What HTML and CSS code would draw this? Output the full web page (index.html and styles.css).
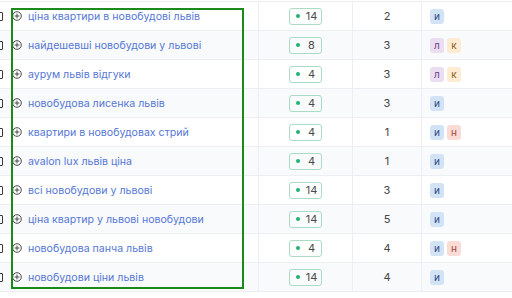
FILE: index.html
```html
<!DOCTYPE html>
<html lang="uk">
<head>
<meta charset="utf-8">
<link rel="stylesheet" href="styles.css">
</head>
<body>
<div class="table">
  <div class="row">
    <div class="cell phrase"><span class="check"></span><svg class="plus" viewBox="0 0 10 10"><circle cx="5" cy="5" r="4.3"/><path d="M5 2.6v4.8M2.6 5h4.8"/></svg><span class="text">ціна квартири в новобудові львів</span></div>
    <div class="cell freq"><span class="badge"><i class="dot"></i><span class="num">14</span></span></div>
    <div class="cell count">2</div>
    <div class="cell tags"><span class="tag t-i">и</span></div>
  </div>
  <div class="row">
    <div class="cell phrase"><span class="check"></span><svg class="plus" viewBox="0 0 10 10"><circle cx="5" cy="5" r="4.3"/><path d="M5 2.6v4.8M2.6 5h4.8"/></svg><span class="text">найдешевші новобудови у львові</span></div>
    <div class="cell freq"><span class="badge"><i class="dot"></i><span class="num">8</span></span></div>
    <div class="cell count">3</div>
    <div class="cell tags"><span class="tag t-l">л</span><span class="tag t-k">к</span></div>
  </div>
  <div class="row">
    <div class="cell phrase"><span class="check"></span><svg class="plus" viewBox="0 0 10 10"><circle cx="5" cy="5" r="4.3"/><path d="M5 2.6v4.8M2.6 5h4.8"/></svg><span class="text">аурум львів відгуки</span></div>
    <div class="cell freq"><span class="badge"><i class="dot"></i><span class="num">4</span></span></div>
    <div class="cell count">3</div>
    <div class="cell tags"><span class="tag t-l">л</span><span class="tag t-k">к</span></div>
  </div>
  <div class="row">
    <div class="cell phrase"><span class="check"></span><svg class="plus" viewBox="0 0 10 10"><circle cx="5" cy="5" r="4.3"/><path d="M5 2.6v4.8M2.6 5h4.8"/></svg><span class="text">новобудова лисенка львів</span></div>
    <div class="cell freq"><span class="badge"><i class="dot"></i><span class="num">4</span></span></div>
    <div class="cell count">3</div>
    <div class="cell tags"><span class="tag t-i">и</span></div>
  </div>
  <div class="row">
    <div class="cell phrase"><span class="check"></span><svg class="plus" viewBox="0 0 10 10"><circle cx="5" cy="5" r="4.3"/><path d="M5 2.6v4.8M2.6 5h4.8"/></svg><span class="text">квартири в новобудовах стрий</span></div>
    <div class="cell freq"><span class="badge"><i class="dot"></i><span class="num">4</span></span></div>
    <div class="cell count">1</div>
    <div class="cell tags"><span class="tag t-i">и</span><span class="tag t-n">н</span></div>
  </div>
  <div class="row">
    <div class="cell phrase"><span class="check"></span><svg class="plus" viewBox="0 0 10 10"><circle cx="5" cy="5" r="4.3"/><path d="M5 2.6v4.8M2.6 5h4.8"/></svg><span class="text">avalon lux львів ціна</span></div>
    <div class="cell freq"><span class="badge"><i class="dot"></i><span class="num">4</span></span></div>
    <div class="cell count">1</div>
    <div class="cell tags"><span class="tag t-i">и</span></div>
  </div>
  <div class="row">
    <div class="cell phrase"><span class="check"></span><svg class="plus" viewBox="0 0 10 10"><circle cx="5" cy="5" r="4.3"/><path d="M5 2.6v4.8M2.6 5h4.8"/></svg><span class="text">всі новобудови у львові</span></div>
    <div class="cell freq"><span class="badge"><i class="dot"></i><span class="num">14</span></span></div>
    <div class="cell count">3</div>
    <div class="cell tags"><span class="tag t-i">и</span></div>
  </div>
  <div class="row">
    <div class="cell phrase"><span class="check"></span><svg class="plus" viewBox="0 0 10 10"><circle cx="5" cy="5" r="4.3"/><path d="M5 2.6v4.8M2.6 5h4.8"/></svg><span class="text">ціна квартир у львові новобудови</span></div>
    <div class="cell freq"><span class="badge"><i class="dot"></i><span class="num">14</span></span></div>
    <div class="cell count">5</div>
    <div class="cell tags"><span class="tag t-i">и</span></div>
  </div>
  <div class="row">
    <div class="cell phrase"><span class="check"></span><svg class="plus" viewBox="0 0 10 10"><circle cx="5" cy="5" r="4.3"/><path d="M5 2.6v4.8M2.6 5h4.8"/></svg><span class="text">новобудова панча львів</span></div>
    <div class="cell freq"><span class="badge"><i class="dot"></i><span class="num">4</span></span></div>
    <div class="cell count">4</div>
    <div class="cell tags"><span class="tag t-i">и</span><span class="tag t-n">н</span></div>
  </div>
  <div class="row">
    <div class="cell phrase"><span class="check"></span><svg class="plus" viewBox="0 0 10 10"><circle cx="5" cy="5" r="4.3"/><path d="M5 2.6v4.8M2.6 5h4.8"/></svg><span class="text">новобудови ціни львів</span></div>
    <div class="cell freq"><span class="badge"><i class="dot"></i><span class="num">14</span></span></div>
    <div class="cell count">4</div>
    <div class="cell tags"><span class="tag t-i">и</span></div>
  </div>
  <div class="highlight"></div>
</div>
</body>
</html>
```
FILE: styles.css
```css
* { box-sizing: border-box; }
html, body { margin: 0; padding: 0; background: #fff; }
body {
  width: 512px;
  height: 298px;
  overflow: hidden;
  font-family: Inter, "Noto Sans", sans-serif;
  font-size: 11px;
  color: #333;
}
.table {
  position: relative;
  margin-top: 1px;
  border-top: 1px solid #eceef3;
}
.row {
  display: grid;
  grid-template-columns: 258px 94px 69px 91px;
  height: 29px;
  border-bottom: 1px solid #eceef3;
}
.row:nth-child(even) { background: #f9fafc; }
.cell {
  display: flex;
  align-items: center;
  min-width: 0;
}
.cell + .cell { border-left: 1px solid #eceef3; }
.phrase { position: relative; padding-left: 12px; }
.check {
  position: absolute;
  left: -6px;
  top: 10px;
  width: 9px;
  height: 9px;
  border: 1px solid #3a3a3a;
  border-radius: 1px;
}
.plus {
  width: 10px;
  height: 10px;
  fill: none;
  stroke: #4a4a4a;
  stroke-width: 1;
  flex: none;
}
.text {
  margin-left: 6px;
  color: #5577d5;
  font-size: 10.6px;
  white-space: nowrap;
}
.freq { justify-content: center; }
.badge {
  display: flex;
  align-items: center;
  width: 33px;
  height: 17px;
  border: 1px solid #a9dcc2;
  border-radius: 3px;
  padding-left: 6px;
}
.dot {
  width: 4px;
  height: 4px;
  border-radius: 50%;
  background: #1fb36e;
  flex: none;
}
.num {
  flex: 1;
  text-align: center;
  margin-left: 2px;
  color: #4a4a4a;
  font-size: 11px;
}
.count { justify-content: center; color: #444; }
.tags { padding-left: 8px; gap: 3px; }
.tag {
  width: 14px;
  height: 15px;
  border-radius: 3px;
  font-size: 10px;
  display: flex;
  align-items: center;
  justify-content: center;
}
.t-i { background: #d3e3f6; color: #2c4a84; }
.t-l { background: #ebdef3; color: #6a3f84; }
.t-k { background: #fdebd2; color: #8a5b22; }
.t-n { background: #fbdbd6; color: #a14a3e; }
.highlight {
  position: absolute;
  left: 11px;
  top: 6px;
  width: 233px;
  height: 281px;
  border: 2px solid #1b8a1b;
  pointer-events: none;
}
```
